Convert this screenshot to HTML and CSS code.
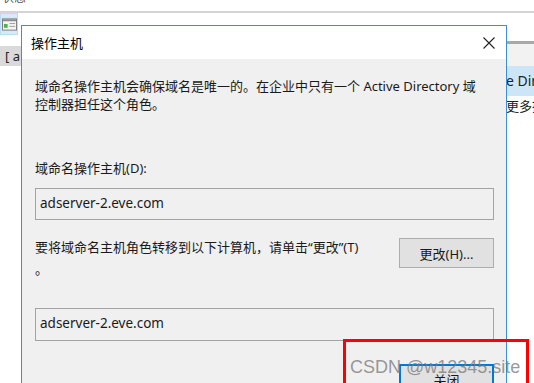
FILE: index.html
```html
<!DOCTYPE html>
<html lang="zh-CN">
<head>
    <meta charset="UTF-8">
    <title>操作主机</title>
    <link rel="stylesheet" href="styles.css">
</head>
<body>
    <!-- 背景窗口 -->
    <div class="back">
        <div class="strip"><span class="cut">状态</span></div>
        <div class="back-row">
            <div class="lcol">
                <div class="tool">
                    <svg width="16" height="13" viewBox="0 0 16 13">
                        <rect x="0.5" y="0.5" width="15" height="12" fill="#f4f4f4" stroke="#7a7a7a"/>
                        <rect x="1" y="1" width="14" height="2" fill="#8a8a8a"/>
                        <rect x="2" y="6" width="4" height="4" fill="#4cb04c"/>
                        <rect x="8" y="5" width="6" height="1" fill="#9a9a9a"/>
                        <rect x="8" y="8" width="6" height="1" fill="#9a9a9a"/>
                    </svg>
                </div>
                <div class="lgap"></div>
                <div class="lbar">[ a</div>
            </div>
            <div class="rcol">
                <div class="rgap"></div>
                <div class="rline"></div>
                <div class="rgap2"></div>
                <div class="rsel">e Dir</div>
                <div class="rtext">更多操</div>
            </div>
        </div>
    </div>

    <!-- 对话框 -->
    <div class="dialog">
        <div class="titlebar">
            <span class="title">操作主机</span>
            <svg class="close-x" width="12" height="12" viewBox="0 0 12 12">
                <path d="M0.5 0.5 L11.5 11.5 M11.5 0.5 L0.5 11.5" stroke="#222" stroke-width="1.1" fill="none"/>
            </svg>
        </div>
        <div class="body">
            <p class="intro">域命名操作主机会确保域名是唯一的。在企业中只有一个 Active Directory 域<br>控制器担任这个角色。</p>
            <p class="label">域命名操作主机(D):</p>
            <div class="field">adserver-2.eve.com</div>
            <div class="change-row">
                <p class="hint">要将域命名主机角色转移到以下计算机，请单击“更改”(T)<br>。</p>
                <button class="btn">更改(H)...</button>
            </div>
            <div class="field field2">adserver-2.eve.com</div>
            <div class="foot">
                <button class="btn btn-default">关闭</button>
            </div>
        </div>
    </div>

    <!-- 标注 -->
    <div class="mark"></div>
    <div class="watermark">CSDN @w12345.site</div>
</body>
</html>
```

FILE: styles.css
```css
* {
    margin: 0;
    padding: 0;
    box-sizing: border-box;
}

body {
    width: 534px;
    height: 383px;
    overflow: hidden;
    position: relative;
    background: #fff;
    font-family: "Noto Sans", "Noto Sans CJK SC", sans-serif;
    font-size: 13px;
    color: #1a1a1a;
}

/* 背景窗口 */
.back {
    display: flex;
    flex-direction: column;
    height: 100%;
}

.strip {
    height: 13px;
    border-bottom: 2px solid #d4d4d4;
    overflow: hidden;
    position: relative;
}

.cut {
    display: block;
    margin-top: -12px;
    margin-left: 2px;
    font-size: 12px;
    color: #555;
}

.back-row {
    display: flex;
    justify-content: space-between;
    flex: 1;
}

.lcol {
    width: 21px;
    display: flex;
    flex-direction: column;
}

.tool {
    height: 22px;
    width: 18px;
    background: #d8eaf9;
    border: 1px solid #bcdcf4;
    display: flex;
    align-items: center;
    padding-left: 1px;
}

.lgap {
    height: 11px;
}

.lbar {
    height: 20px;
    background: #dadada;
    font-size: 13px;
    line-height: 20px;
    padding-left: 5px;
    color: #222;
    white-space: nowrap;
    overflow: hidden;
}

.rcol {
    width: 28px;
    display: flex;
    flex-direction: column;
}

.rgap {
    height: 28px;
}

.rline {
    height: 3px;
    background: #a8a8a8;
}

.rgap2 {
    height: 22px;
    background: #f2f2f2;
}

.rsel {
    height: 30px;
    background: #cde6f7;
    line-height: 30px;
    white-space: nowrap;
    overflow: hidden;
    font-size: 14px;
    color: #222;
}

.rtext {
    white-space: nowrap;
    overflow: hidden;
    font-size: 13px;
    line-height: 20px;
    color: #222;
}

/* 对话框 */
.dialog {
    position: absolute;
    left: 21px;
    top: 25px;
    width: 486px;
    height: 370px;
    border: 1px solid #3a8fd9;
    background: #f0f0f0;
    display: flex;
    flex-direction: column;
}

.titlebar {
    height: 33px;
    background: #fff;
    display: flex;
    align-items: center;
    justify-content: space-between;
    padding: 0 11px 0 9px;
}

.title {
    font-size: 13px;
    color: #000;
}

.body {
    padding: 18px 12px 0 13px;
    display: flex;
    flex-direction: column;
}

.intro {
    line-height: 18px;
}

.label {
    margin-top: 46px;
    line-height: 18px;
}

.field {
    margin-top: 11px;
    height: 32px;
    border: 1px solid #a3a3a3;
    padding-left: 4px;
    line-height: 28px;
    font-size: 13.5px;
}

.change-row {
    margin-top: 16px;
    display: flex;
    justify-content: space-between;
    align-items: flex-start;
}

.hint {
    line-height: 22px;
}

.btn {
    width: 95px;
    height: 30px;
    margin-top: 2px;
    background: #e1e1e1;
    border: 1px solid #adadad;
    font-family: "Noto Sans", "Noto Sans CJK SC", sans-serif;
    font-size: 13px;
    color: #1a1a1a;
}

.field2 {
    margin-top: 28px;
    height: 33px;
}

.foot {
    display: flex;
    justify-content: flex-end;
    margin-top: 23px;
}

.btn-default {
    margin-top: 0;
    border: 2px solid #0078d7;
}

/* 标注 */
.mark {
    position: absolute;
    left: 343px;
    top: 339px;
    width: 186px;
    height: 60px;
    border: 3px solid #ff0000;
}

.watermark {
    position: absolute;
    left: 350px;
    top: 356px;
    font-family: "Liberation Sans", Arial, sans-serif;
    font-size: 18px;
    line-height: 22px;
    color: rgba(120, 120, 120, 0.75);
    white-space: nowrap;
}
```
